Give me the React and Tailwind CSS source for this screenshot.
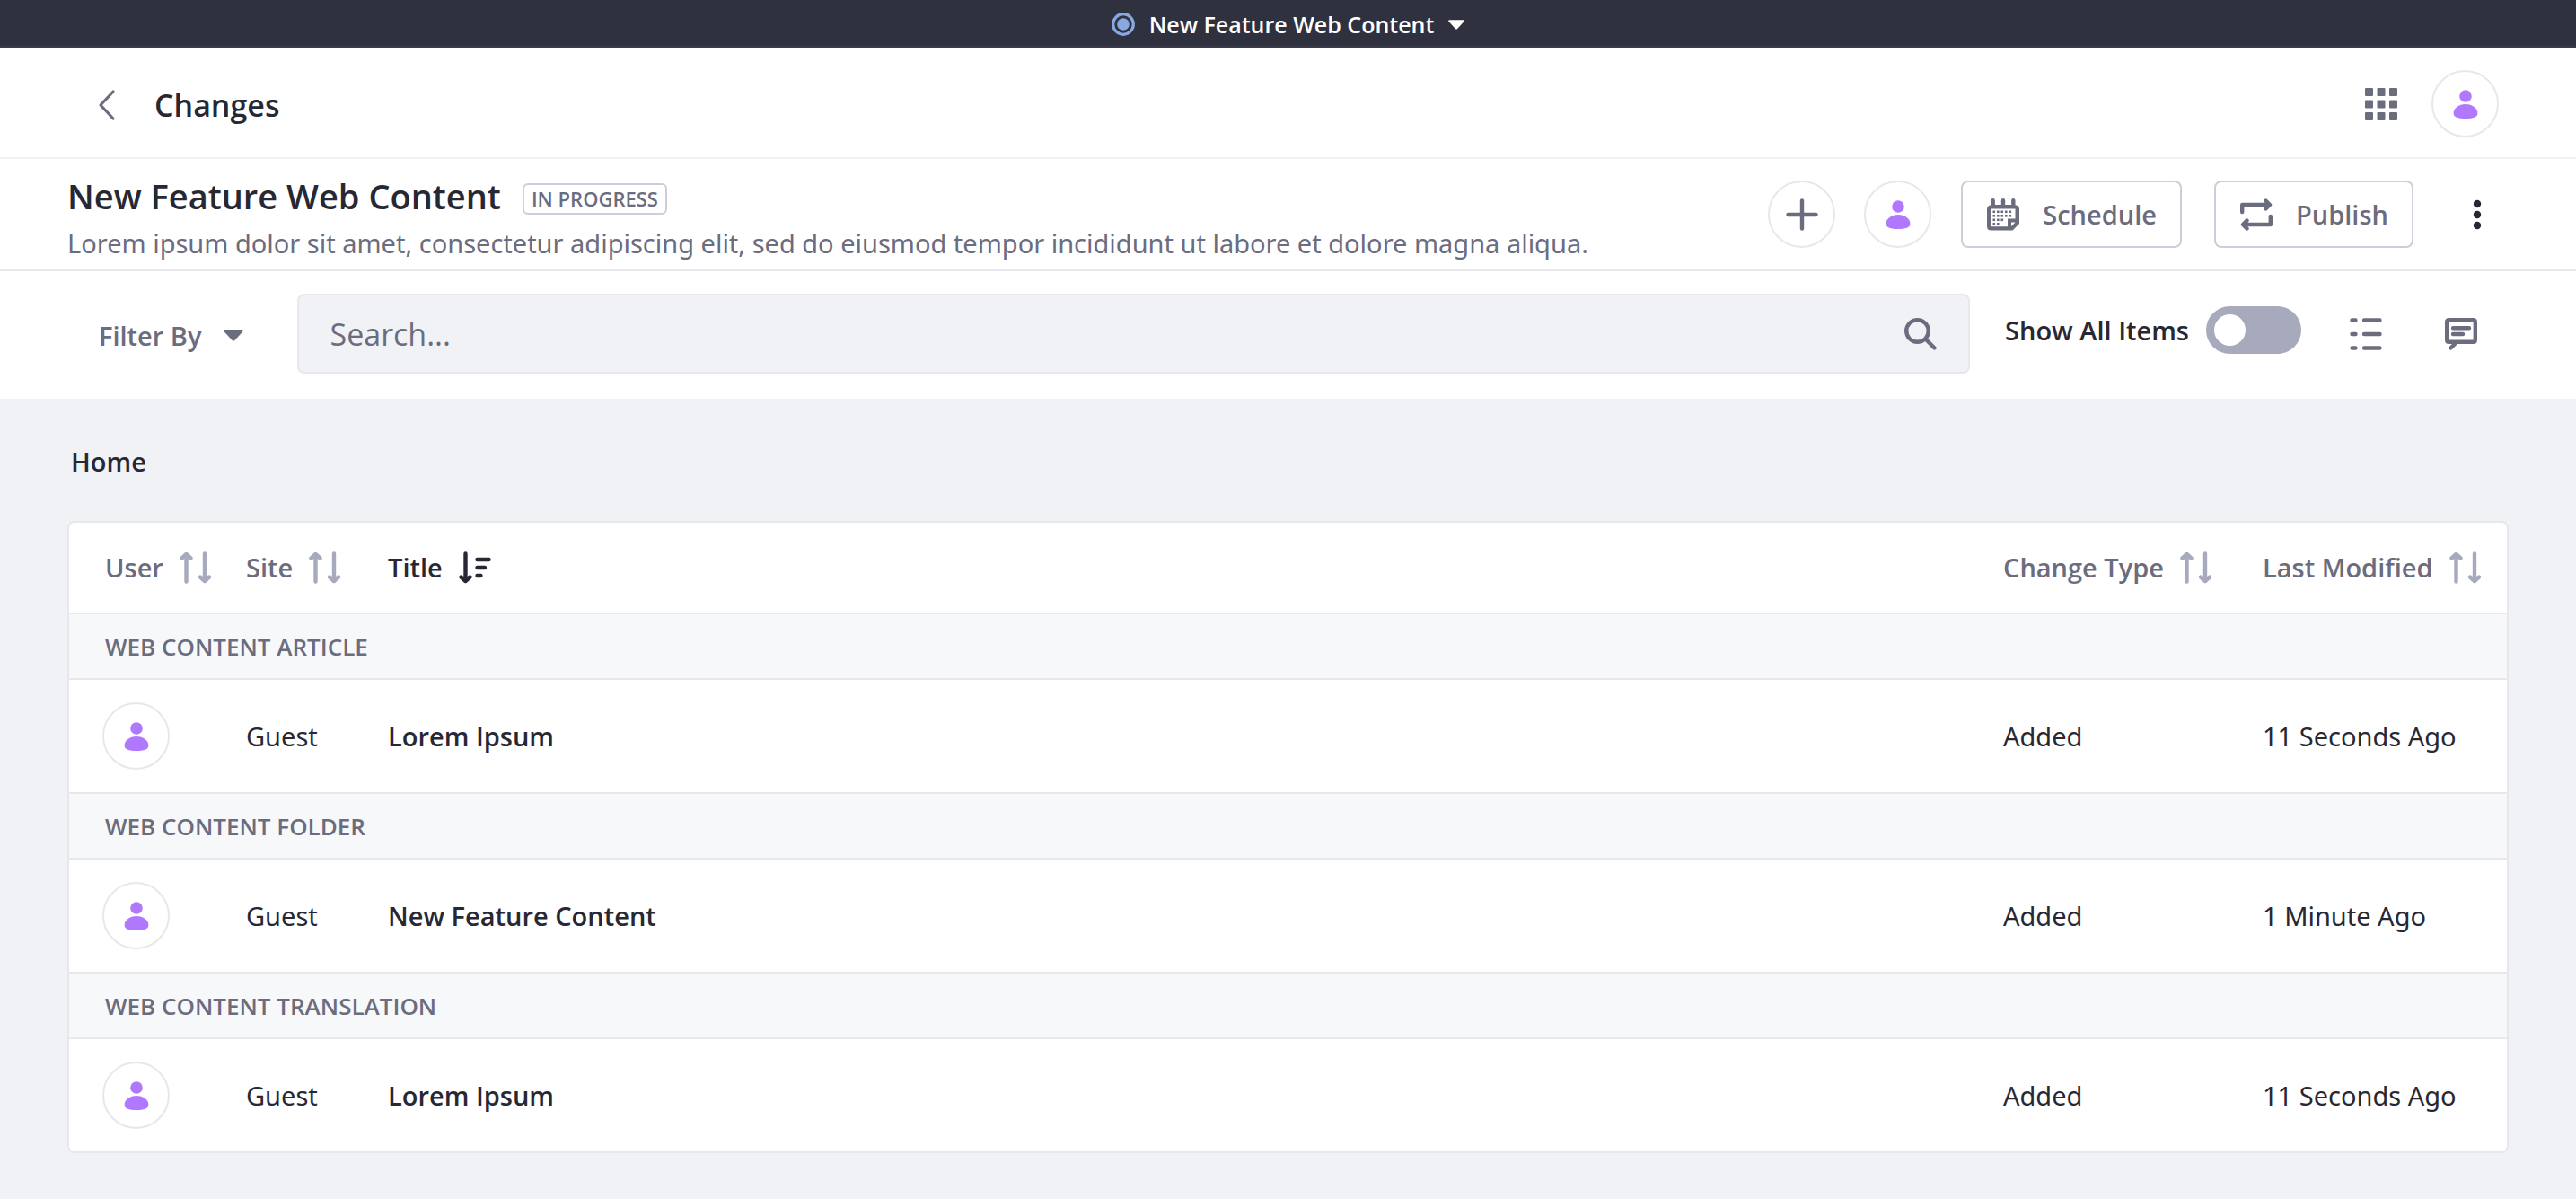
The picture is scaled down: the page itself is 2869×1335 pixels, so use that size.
import React from "react";

const groups = [
  { label: "WEB CONTENT ARTICLE", title: "Lorem Ipsum", when: "11 Seconds Ago" },
  { label: "WEB CONTENT FOLDER", title: "New Feature Content", when: "1 Minute Ago" },
  { label: "WEB CONTENT TRANSLATION", title: "Lorem Ipsum", when: "11 Seconds Ago" },
];

function Icon({ children, className = "" }) {
  return (
    <svg
      viewBox="0 0 36 36"
      aria-hidden="true"
      className={`size-9 shrink-0 ${className}`}
      fill="none"
      stroke="currentColor"
      strokeWidth="4.4"
      strokeLinecap="round"
      strokeLinejoin="round"
    >
      {children}
    </svg>
  );
}

function Avatar() {
  return (
    <span className="flex size-[75px] shrink-0 items-center justify-center rounded-full border-2 border-[#e7e7ed] bg-white text-[#b078ff]">
      <svg viewBox="0 0 36 36" className="size-9" fill="currentColor" aria-hidden="true">
        <circle cx="18" cy="9" r="6.8" />
        <path d="M18 18C10.500 18 4.600 22.500 4.600 28C4.600 32.800 10 34 18 34C26 34 31.400 32.800 31.400 28C31.400 22.500 25.500 18 18 18Z" />
      </svg>
    </span>
  );
}

function Caret({ className }) {
  return (
    <svg viewBox="0 0 22 13" className={className} fill="currentColor" aria-hidden="true">
      <path d="M1.500 0H20.500Q22.600 .4 21.300 2.200L12.400 12Q11 13.300 9.600 12L.7 2.200Q-.6 .4 1.500 0Z" />
    </svg>
  );
}

function SortIcon() {
  return (
    <Icon className="text-[#a7a9bc]">
      <path d="M7.500 33.500V4M2.500 7.500L7.500 3L12.500 7.500M28 2.500V32M23 28.500L28 33L33 28.500" />
    </Icon>
  );
}

function SortDescIcon() {
  return (
    <Icon>
      <path d="M7.500 2.500V32M2.500 28.500L7.500 33L12.500 28.500M20.500 9H33.500M20.500 18H29M20.500 27H24.500" />
    </Icon>
  );
}

function CalendarIcon() {
  const dots = [
    [7, 14], [11.500, 14], [16, 14], [20.500, 14], [25, 14],
    [7, 18.500], [11.500, 18.500], [16, 18.500], [20.500, 18.500], [25, 18.500],
    [7, 23], [11.500, 23], [16, 23],
    [7, 27.500], [11.500, 27.500],
  ];
  return (
    <svg viewBox="0 0 36 36" className="size-9 shrink-0" fill="currentColor" aria-hidden="true">
      <path
        fillRule="evenodd"
        d="M4.500 8V2.200a2.200 2.200 0 0 1 4.400 0V7H15.800V2.200a2.200 2.200 0 0 1 4.400 0V7H27.100V2.200a2.200 2.200 0 0 1 4.400 0V7.200Q36 8 36 12V28L28.500 35.500H4.500Q0 35.500 0 31V12Q0 8 4.500 7.200ZM4.500 11.500V31.300H23V22.500H31.500V11.500ZM27 26.500V31L31.500 26.500Z"
      />
      {dots.map(([x, y]) => (
        <rect key={`${x}-${y}`} x={x - 0.5} y={y - 0.5} width="2.600" height="2.600" />
      ))}
    </svg>
  );
}

function HeaderCell({ label, first, active }) {
  return (
    <th
      scope="col"
      className={`h-[102px] border-b-2 border-[#e7e7ed] p-0 text-left font-semibold ${first ? "pl-10" : "pl-4"}`}
    >
      <button
        type="button"
        className={`flex items-center gap-[18px] whitespace-nowrap font-semibold ${active ? "text-[#272833]" : "text-[#6b6c7e]"}`}
      >
        {label}
        {active ? <SortDescIcon /> : <SortIcon />}
      </button>
    </th>
  );
}

export default function App() {
  return (
    <div className="min-h-screen bg-[#f1f2f5] font-['Open_Sans','Noto_Sans',sans-serif] text-[29px] leading-10 text-[#272833]">
      <div className="flex h-[53px] items-center justify-center border-b-2 border-[#393a4a] bg-[#30313f] pt-[3px] text-white">
        <button type="button" className="flex items-center gap-4 text-[25px] font-semibold">
          <svg viewBox="0 0 26 26" className="size-[26px]" fill="none" aria-hidden="true">
            <circle cx="13" cy="13" r="11.300" stroke="#89a7e0" strokeWidth="3.200" />
            <circle cx="13" cy="13" r="6.800" fill="#89a7e0" />
          </svg>
          New Feature Web Content
          <Caret className="h-[11px] w-[18px]" />
        </button>
      </div>

      <header className="flex items-center justify-between border-b-2 border-[#f1f2f5] bg-white pt-[25px] pr-[86px] pb-[22px] pl-[100px]">
        <div className="flex items-center gap-9 pt-[3px]">
          <a href="#back" aria-label="Back" className="text-[#6b6c7e]">
            <Icon>
              <path d="M26 3L12 18L26 33" strokeWidth="3.200" />
            </Icon>
          </a>
          <h1 className="text-[34px] font-semibold">Changes</h1>
        </div>
        <div className="flex items-center gap-[38px]">
          <button type="button" aria-label="Applications" className="text-[#6b6c7e]">
            <svg viewBox="0 0 36 36" className="size-9" fill="currentColor" aria-hidden="true">
              {[0, 13.500, 27].map((y) =>
                [0, 13.500, 27].map((x) => (
                  <rect key={`${x}-${y}`} x={x} y={y} width="9" height="9" rx="1" />
                )),
              )}
            </svg>
          </button>
          <button type="button" aria-label="User menu">
            <Avatar />
          </button>
        </div>
      </header>

      <section className="flex items-start justify-between border-b-2 border-[#e7e7ed] bg-white pt-4 pr-[92px] pb-[9px] pl-[75px]">
        <div>
          <div className="flex items-end gap-6">
            <h2 className="text-[38px] leading-[50px] font-semibold">New Feature Web Content</h2>
            <span className="mb-1 rounded-md border-2 border-[#cdced9] px-2 text-[22px] leading-[31px] font-semibold text-[#6b6c7e]">
              IN PROGRESS
            </span>
          </div>
          <p className="mt-2 font-['Noto_Sans',sans-serif] text-[#6b6c7e]">
            Lorem ipsum dolor sit amet, consectetur adipiscing elit, sed do eiusmod tempor incididunt ut labore et dolore magna aliqua.
          </p>
        </div>
        <div className="mt-2 flex items-center text-[#6b6c7e]">
          <button
            type="button"
            aria-label="Invite users"
            className="mr-8 flex size-[75px] items-center justify-center rounded-full border-2 border-[#e7e7ed]"
          >
            <Icon>
              <path d="M18 2.500V33.500M2.500 18H33.500" />
            </Icon>
          </button>
          <button type="button" aria-label="Collaborator" className="mr-[33px]">
            <Avatar />
          </button>
          <button
            type="button"
            className="mr-9 flex h-[75px] items-center gap-[26px] rounded-lg border-2 border-[#cdced9] pr-[26px] pl-[27px] font-semibold"
          >
            <CalendarIcon />
            Schedule
          </button>
          <button
            type="button"
            className="mr-[53px] flex h-[75px] items-center gap-[26px] rounded-lg border-2 border-[#cdced9] pr-[26px] pl-[27px] font-semibold"
          >
            <Icon>
              <path d="M2.200 15V7H32M28.500 2.500L33 7L28.500 11.500M33.800 20V29H4M7.500 24.500L3 29L7.500 33.500" />
            </Icon>
            Publish
          </button>
          <button type="button" aria-label="More actions" className="text-[#272833]">
            <svg viewBox="0 0 36 36" className="size-9" fill="currentColor" aria-hidden="true">
              <circle cx="18" cy="6" r="4.200" />
              <circle cx="18" cy="18" r="4.200" />
              <circle cx="18" cy="30" r="4.200" />
            </svg>
          </button>
        </div>
      </section>

      <section className="flex items-center bg-white px-[110px] pt-[25px] pb-7">
        <button type="button" className="mr-[60px] flex items-center gap-6 pt-1 font-semibold whitespace-nowrap text-[#6b6c7e]">
          Filter By
          <Caret className="h-[13px] w-[22px]" />
        </button>
        <div className="flex h-[89px] flex-1 items-center rounded-lg border-2 border-[#e7e7ed] bg-[#f1f2f5] px-[35px]">
          <input
            type="text"
            aria-label="Search"
            placeholder="Search..."
            className="h-full min-w-0 flex-1 bg-transparent text-[34px] outline-none placeholder:text-[#6b6c7e] placeholder:opacity-100"
          />
          <button type="button" aria-label="Submit search" className="text-[#6b6c7e]">
            <Icon>
              <circle cx="14.500" cy="14.500" r="12.300" />
              <path d="M24 24L33.500 33.500" />
            </Icon>
          </button>
        </div>
        <label className="ml-[39px] flex cursor-pointer items-center gap-[19px] pb-2 font-semibold whitespace-nowrap">
          Show All Items
          <input
            type="checkbox"
            role="switch"
            className="h-[53px] w-[106px] appearance-none rounded-full bg-[#a7a9bc] p-[9px] before:block before:size-[35px] before:rounded-full before:bg-white checked:bg-[#0b5fff] checked:before:ml-auto"
          />
        </label>
        <button type="button" aria-label="View as list" className="ml-[54px] text-[#6b6c7e]">
          <Icon>
            <path d="M2.500 2.500H6.500M16 2.500H33.500M2.500 18H6.500M16 18H33.500M2.500 33.500H6.500M16 33.500H33.500" />
          </Icon>
        </button>
        <button type="button" aria-label="Comments" className="ml-[70px] text-[#6b6c7e]">
          <Icon>
            <path d="M4.500 2.200H31.500Q33.800 2.200 33.800 4.500V24.500Q33.800 26.800 31.500 26.800H4.500Q2.200 26.800 2.200 24.500V4.500Q2.200 2.200 4.500 2.200ZM12 28L6.500 33.500M9 11.200H27M9 18H20" />
          </Icon>
        </button>
      </section>

      <main className="px-[75px] pt-[50px] pb-12">
        <nav aria-label="Breadcrumb" className="mb-[46px] pl-1 font-semibold">
          <a href="#home">Home</a>
        </nav>
        <div className="overflow-hidden rounded-lg border-2 border-[#e7e7ed] bg-white">
          <table className="w-full table-fixed border-separate border-spacing-0">
            <colgroup>
              <col className="w-[181px]" />
              <col className="w-[158px]" />
              <col />
              <col className="w-[289px]" />
              <col className="w-[288px]" />
            </colgroup>
            <thead>
              <tr>
                <HeaderCell label="User" first />
                <HeaderCell label="Site" />
                <HeaderCell label="Title" active />
                <HeaderCell label="Change Type" />
                <HeaderCell label="Last Modified" />
              </tr>
            </thead>
            {groups.map((g) => (
              <tbody key={g.label} className="group">
                <tr>
                  <th
                    colSpan={5}
                    scope="rowgroup"
                    className="h-[73px] border-b-2 border-[#e7e7ed] bg-[#f7f8fa] p-0 pl-10 text-left text-[26px] font-semibold text-[#6b6c7e]"
                  >
                    {g.label}
                  </th>
                </tr>
                <tr className="*:h-[127px] *:border-b-2 *:border-[#e7e7ed] *:py-0 *:pr-0 group-last:*:h-[125px] group-last:*:border-b-0">
                  <td className="pl-[37px]">
                    <Avatar />
                  </td>
                  <td className="pl-4 font-['Noto_Sans',sans-serif]">Guest</td>
                  <td className="pl-4 font-semibold">{g.title}</td>
                  <td className="pl-4 font-['Noto_Sans',sans-serif]">Added</td>
                  <td className="pl-4 font-['Noto_Sans',sans-serif] whitespace-nowrap">{g.when}</td>
                </tr>
              </tbody>
            ))}
          </table>
        </div>
      </main>
    </div>
  );
}
